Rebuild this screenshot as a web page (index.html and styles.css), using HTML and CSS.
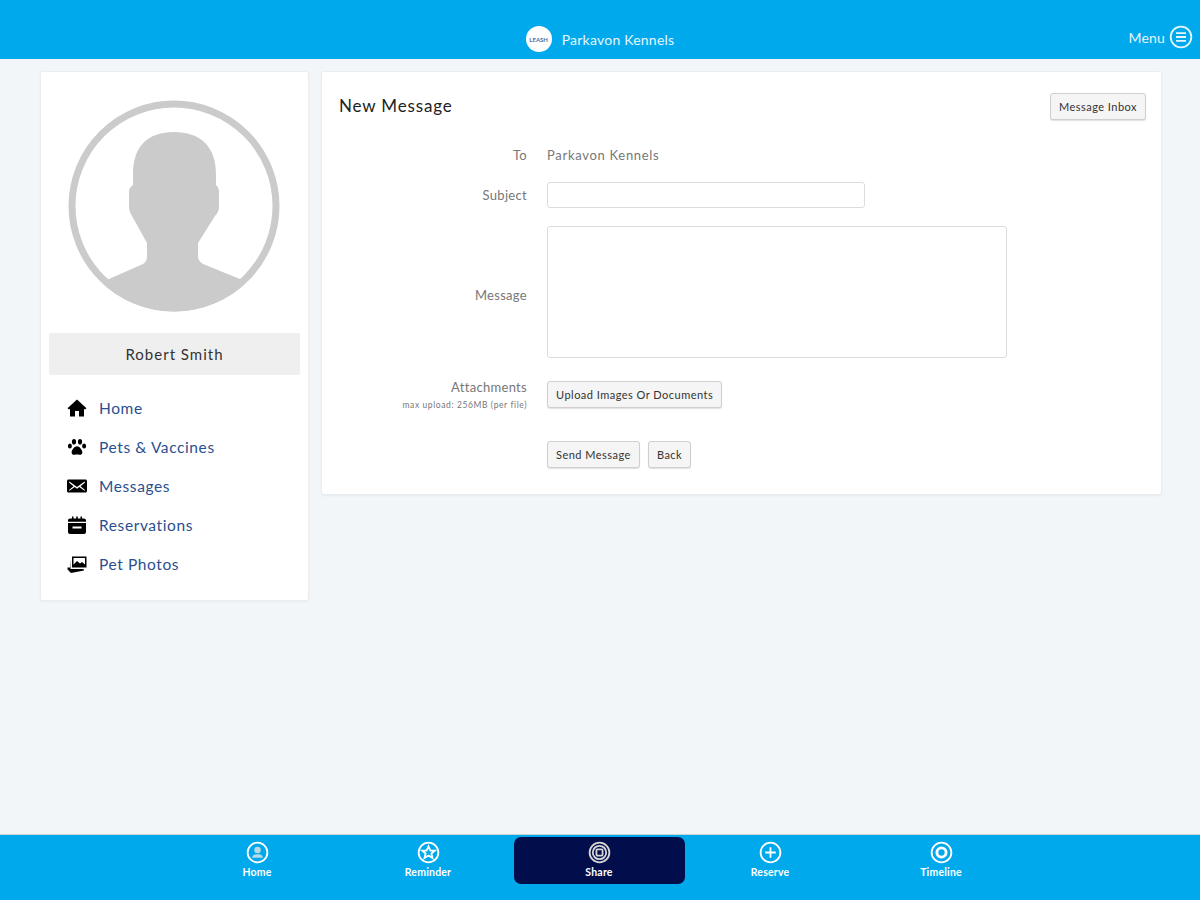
FILE: index.html
```html
<!DOCTYPE html>
<html lang="en">
<head>
   <meta charset="UTF-8">
   <meta name="viewport" content="width=device-width, initial-scale=1.0">
   <title>New Message</title>
   <link rel="stylesheet" href="styles.css">
</head>
<body>
   <header class="top-bar">
       <div class="brand">
           <span class="brand-logo"><span class="logo-text">LEASH</span></span>
           <span class="brand-name">Parkavon Kennels</span>
       </div>
       <div class="menu-link">
           <span>Menu</span>
           <svg class="menu-icon" viewBox="0 0 24 24" fill="none" stroke="#e6f6fd" stroke-width="1.8">
               <circle cx="12" cy="12" r="10.3"/>
               <path d="M7 8.2h10M7 12h10M7 15.8h10"/>
           </svg>
       </div>
   </header>

   <main class="content">
       <aside class="side-card">
           <svg class="avatar" viewBox="0 0 212 212">
               <defs><clipPath id="avatar-clip"><circle cx="106" cy="106" r="105.500"/></clipPath></defs>
               <circle cx="106" cy="106" r="102" fill="#fff" stroke="#cbcbcb" stroke-width="7"/>
               <path clip-path="url(#avatar-clip)" fill="#cbcbcb" d="M65 74C65 46 80 32 106 32C132 32 148 46 148 74V85C150 87 151 89 151 92V106C151 110 150 113 147 116L130 143V156C130 160 132 162 135 164L172 179L200 195V212H12V195L41 179L75 164C78 162 79 160 79 156V143L64 116C62 113 61 110 61 106V92C61 89 62 87 65 85Z"/>
           </svg>
           <div class="user-name">Robert Smith</div>
           <nav class="side-nav">
               <a class="side-link">
                   <svg viewBox="0 0 20 20"><path d="M10 1.500L0.500 10.200L2 11.600L3 10.700V18.500H8V13H12V18.500H17V10.700L18 11.600L19.500 10.200Z"/></svg>
                   Home
               </a>
               <a class="side-link">
                   <svg viewBox="0 0 20 20"><ellipse cx="2.900" cy="9" rx="2" ry="2.500"/><ellipse cx="7" cy="4.800" rx="2.100" ry="2.800"/><ellipse cx="13" cy="4.800" rx="2.100" ry="2.800"/><ellipse cx="17.100" cy="9" rx="2" ry="2.500"/><path d="M10 9.300C7.500 9.300 4.600 13 4.600 15.500C4.600 17.500 6.500 18 7.700 17.700C9 17.400 11 17.400 12.300 17.700C13.500 18 15.400 17.500 15.400 15.500C15.400 13 12.500 9.300 10 9.300Z"/></svg>
                   Pets &amp; Vaccines
               </a>
               <a class="side-link">
                   <svg viewBox="0 0 20 20"><path d="M1.500 3.500H18.500C19.300 3.500 20 4.200 20 5V15C20 15.800 19.300 16.500 18.500 16.500H1.500C.7 16.500 0 15.800 0 15V5C0 4.200 .7 3.500 1.500 3.500ZM2.500 5.500L10 11L17.500 5.500L18 6.500L13.500 10.200L18 14L17.500 14.800L12.300 11L10 12.800L7.700 11L2.500 14.800L2 14L6.500 10.200L2 6.500Z" fill-rule="evenodd"/></svg>
                   Messages
               </a>
               <a class="side-link">
                   <svg viewBox="0 0 20 20"><path d="M5 1.500H6.500V3.500H9.200V1.500H10.800V3.500H13.500V1.500H15V3.500H17C18.100 3.500 19 4.400 19 5.500V17C19 18.100 18.100 19 17 19H3C1.900 19 1 18.100 1 17V5.500C1 4.400 1.900 3.500 3 3.500H5ZM1 6.800V8H19V6.800ZM5.500 11.500V13.500H14.500V11.500Z" fill-rule="evenodd"/></svg>
                   Reservations
               </a>
               <a class="side-link">
                   <svg viewBox="0 0 20 20"><path d="M5 2.500H19.500V13.500H5ZM6.500 4V10.500L10 7L13 9.500L15 8L18 10.500V4Z" fill-rule="evenodd"/><path d="M3.500 5V15H16.500L17 16.500L4 19L2.500 17.500L.5 15.500L3 15Z"/><path d="M.5 13.500H3V15.500H.5Z"/></svg>
                   Pet Photos
               </a>
           </nav>
       </aside>

       <section class="message-card">
           <div class="card-head">
               <h2>New Message</h2>
               <button class="btn" type="button">Message Inbox</button>
           </div>
           <form class="message-form">
               <label class="field-label">To</label>
               <div class="static-value">Parkavon Kennels</div>

               <label class="field-label">Subject</label>
               <input class="text-input" type="text">

               <label class="field-label message-label">Message</label>
               <textarea class="text-area"></textarea>

               <div class="field-label attach-label">
                   Attachments
                   <small>max upload: 256MB (per file)</small>
               </div>
               <div><button class="btn" type="button">Upload Images Or Documents</button></div>

               <div></div>
               <div class="form-actions">
                   <button class="btn" type="button">Send Message</button>
                   <button class="btn" type="button">Back</button>
               </div>
           </form>
       </section>
   </main>

   <footer class="bottom-bar">
       <a class="tab">
           <svg viewBox="0 0 24 24"><circle cx="12" cy="12" r="10.300"/><circle cx="12" cy="9.500" r="3.400" class="solid"/><path d="M6.500 17.500C6.500 14.500 9 13.800 12 13.800S17.500 14.500 17.500 17.500Z" class="solid"/></svg>
           Home
       </a>
       <a class="tab">
           <svg viewBox="0 0 24 24"><circle cx="12" cy="12" r="10.300"/><path d="M12 5.500L14 10H18.500L15 13L16.200 17.800L12 15.200L7.800 17.800L9 13L5.500 10H10Z"/></svg>
           Reminder
       </a>
       <a class="tab active">
           <svg viewBox="0 0 24 24"><circle cx="12" cy="12" r="10.300"/><circle cx="12" cy="12" r="7"/><rect x="8.800" y="8.800" width="6.400" height="6.400" rx="1"/></svg>
           Share
       </a>
       <a class="tab">
           <svg viewBox="0 0 24 24"><circle cx="12" cy="12" r="10.300"/><path d="M12 6.500v11M6.500 12h11"/></svg>
           Reserve
       </a>
       <a class="tab">
           <svg viewBox="0 0 24 24"><circle cx="12" cy="12" r="10.300"/><circle cx="12" cy="12" r="4.800" stroke-width="3"/></svg>
           Timeline
       </a>
   </footer>
</body>
</html>
```

FILE: styles.css
```css
* {
    box-sizing: border-box;
}

body {
    margin: 0;
    height: 900px;
    display: flex;
    flex-direction: column;
    background-color: #f3f6f8;
    font-family: 'Lato', 'Open Sans', sans-serif;
    color: #333;
    overflow: hidden;
}

.top-bar {
    height: 59px;
    flex: none;
    background-color: #00a9ec;
    position: relative;
    display: flex;
    justify-content: center;
    color: #e6f6fd;
}

.brand {
    display: flex;
    align-items: center;
    gap: 10px;
    padding-top: 19px;
}

.brand-logo {
    width: 26px;
    height: 26px;
    border-radius: 50%;
    background-color: #fff;
    display: flex;
    align-items: center;
    justify-content: center;
}

.logo-text {
    font-size: 6px;
    font-weight: 700;
    color: #4a6fa8;
}

.brand-name {
    font-size: 14px;
    letter-spacing: 0.230px;
}

.menu-link {
    position: absolute;
    top: 25px;
    right: 7px;
    display: flex;
    align-items: center;
    gap: 4px;
    font-size: 14px;
    letter-spacing: 0.200px;
}

.menu-icon {
    width: 24px;
    height: 24px;
}

.content {
    flex: 1;
    display: flex;
    align-items: flex-start;
    gap: 12px;
    padding: 12px 38px 0 40px;
}

.side-card,
.message-card {
    background-color: #fff;
    border: 1px solid #ebeef0;
    border-radius: 3px;
    box-shadow: 0 1px 2px rgba(0, 0, 0, 0.05);
}

.side-card {
    width: 269px;
    height: 530px;
    flex: none;
    padding: 28px 8px 0;
}

.avatar {
    display: block;
    width: 212px;
    height: 212px;
    margin: 0 auto 21px 19px;
}

.user-name {
    height: 42px;
    line-height: 42px;
    background-color: #efefef;
    border-radius: 2px;
    text-align: center;
    font-size: 15px;
    letter-spacing: 1px;
    color: #333;
}

.side-nav {
    display: flex;
    flex-direction: column;
    gap: 19px;
    padding: 23px 0 0 18px;
}

.side-link {
    display: flex;
    align-items: center;
    gap: 12px;
    height: 20px;
    font-size: 15.500px;
    letter-spacing: 0.600px;
    color: #2a4f8f;
}

.side-link svg {
    width: 20px;
    height: 20px;
    fill: #000;
    flex: none;
}

.message-card {
    flex: 1;
    height: 424px;
    padding: 21px 15px 0 17px;
}

.card-head {
    display: flex;
    align-items: center;
    justify-content: space-between;
    height: 27px;
}

.card-head h2 {
    margin: -2px 0 0;
    font-size: 17px;
    font-weight: 400;
    letter-spacing: 0.850px;
    color: #222;
}

.btn {
    height: 27px;
    padding: 0 8px;
    background-color: #f5f5f5;
    border: 1px solid #cfcfcf;
    border-radius: 3px;
    box-shadow: 0 1px 1px rgba(0, 0, 0, 0.12);
    font-family: inherit;
    font-size: 11px;
    letter-spacing: 0.480px;
    color: #333;
}

.message-form {
    display: grid;
    grid-template-columns: 188px 460px;
    grid-template-rows: 40px 44px 155px 60px 27px;
    column-gap: 20px;
    align-items: start;
    margin-top: 22px;
}

.field-label {
    text-align: right;
    font-size: 13px;
    line-height: 26px;
    letter-spacing: 0.300px;
    color: #777;
}

.message-label {
    margin-top: 56px;
}

.static-value {
    font-size: 13px;
    line-height: 26px;
    letter-spacing: 0.700px;
    color: #777;
}

.text-input {
    display: block;
    width: 318px;
    height: 26px;
    border: 1px solid #d9dde0;
    border-radius: 3px;
}

.text-area {
    display: block;
    width: 460px;
    height: 132px;
    border: 1px solid #d9dde0;
    border-radius: 3px;
    resize: none;
}

.attach-label {
    line-height: 13px;
}

.attach-label small {
    display: block;
    margin-top: 6px;
    font-size: 8.500px;
    line-height: 11px;
    letter-spacing: 0.600px;
    color: #777;
}

.form-actions {
    display: flex;
    gap: 8px;
}

.bottom-bar {
    height: 66px;
    flex: none;
    background-color: #00a9ec;
    border-top: 1px solid #c9d3d8;
    padding: 2px 2px 0 0;
    display: flex;
    justify-content: center;
    align-items: flex-start;
}

.tab {
    width: 171px;
    height: 47px;
    display: flex;
    flex-direction: column;
    align-items: center;
    gap: 2px;
    padding-top: 4px;
    font-size: 10.500px;
    font-weight: 700;
    letter-spacing: 0.200px;
    color: #fff;
    border-radius: 7px;
}

.tab svg {
    width: 23px;
    height: 23px;
    fill: none;
    stroke: #fff;
    stroke-width: 1.900;
}

.tab svg .solid {
    fill: #bcd9e8;
    stroke: none;
}

.tab.active {
    background-color: #020e4c;
}

.tab.active svg {
    stroke: #d5d5d5;
}
```
